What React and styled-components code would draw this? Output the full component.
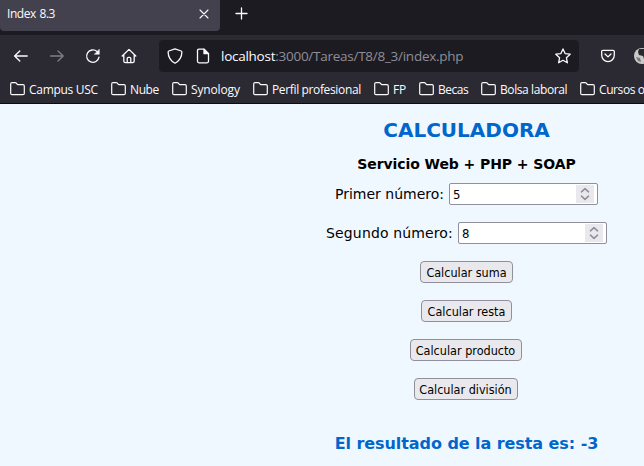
import React from 'react';
import styled, { createGlobalStyle } from 'styled-components';

const GlobalStyle = createGlobalStyle`
  * { box-sizing: border-box; }
  html, body { margin: 0; overflow: hidden; background: #f0f8ff; }
`;

const Window = styled.div`
  width: 644px;
  height: 466px;
  overflow: hidden;
  display: flex;
  flex-direction: column;
  font-family: "Open Sans", "Noto Sans", sans-serif;
  color: #fbfbfe;
`;

const TabStrip = styled.div`
  flex: none;
  height: 35px;
  display: flex;
  background: #1c1b22;
`;

const Tab = styled.div`
  width: 220px;
  height: 31px;
  padding: 0 10px 4px 7px;
  display: flex;
  align-items: center;
  justify-content: space-between;
  background: #42414d;
  border-radius: 0 0 4px 4px;
  font-size: 12px;
  letter-spacing: -0.45px;
  word-spacing: 1px;
`;

const NewTab = styled.div`
  padding: 7px 0 0 15px;
`;

const Icon = styled.svg`
  display: block;
  flex: none;
  fill: none;
  stroke: currentColor;
  stroke-width: ${(p) => p.$weight || 1.3};
  stroke-linecap: round;
  stroke-linejoin: round;
`;

const NavBar = styled.div`
  flex: none;
  height: 41px;
  display: flex;
  align-items: center;
  padding-left: 13px;
  background: #2b2a33;
`;

const NavIcon = styled.span`
  width: 16px;
  margin-right: 20px;
  opacity: ${(p) => (p.$dim ? 0.4 : 1)};
`;

const UrlBar = styled.div`
  width: 420px;
  height: 32px;
  margin: 0 22px 0 2px;
  padding: 0 8px;
  display: flex;
  align-items: center;
  gap: 12px;
  flex: none;
  background: #1c1b22;
  border-radius: 4px;
`;

const Url = styled.div`
  flex: 1;
  margin-left: -2px;
  white-space: nowrap;
  font-size: 13.5px;
  letter-spacing: -0.26px;
  color: #8f8e96;
`;

const Host = styled.span`
  color: #fbfbfe;
`;

const Avatar = styled.svg`
  flex: none;
  display: block;
  margin-left: 19px;
`;

const BookmarkBar = styled.div`
  flex: none;
  height: 28px;
  display: flex;
  padding: 0 0 2px 10px;
  background: #2b2a33;
  border-bottom: 1px solid #0c0c0d;
`;

const Bookmark = styled.div`
  flex: none;
  width: ${(p) => p.$width}px;
  display: flex;
  align-items: center;
  gap: 4px;
  white-space: nowrap;
  font-size: 12px;
  letter-spacing: ${(p) => p.$tracking}px;
`;

const BookmarkName = styled.span`
  padding-top: 2px;
`;

const Page = styled.main`
  flex: none;
  width: 933px;
  height: 362px;
  padding-top: 14px;
  display: flex;
  flex-direction: column;
  align-items: center;
  background: #f0f8ff;
  color: #000;
  font-family: "DejaVu Sans", Verdana, sans-serif;
`;

const Title = styled.h1`
  margin: 0;
  font-size: 20px;
  line-height: 24px;
  letter-spacing: 0;
  color: #0066cc;
`;

const Subtitle = styled.h2`
  margin: 12px 0 9px;
  font-size: 14px;
  line-height: 20px;
  letter-spacing: -0.08px;
`;

const Field = styled.label`
  height: 22px;
  margin-bottom: 17px;
  display: flex;
  align-items: center;
  gap: 5px;
  font-size: 14px;
  letter-spacing: ${(p) => p.$tracking}px;
`;

const NumberBox = styled.span`
  width: 149px;
  height: 22px;
  padding: 0 3px;
  display: flex;
  align-items: center;
  justify-content: space-between;
  background: #fff;
  border: 1px solid #8f8f9d;
  border-radius: 2px;
  font-family: "DejaVu Sans Condensed", "DejaVu Sans", sans-serif;
  font-size: 13px;
`;

const Spinner = styled.span`
  width: 18px;
  height: 18px;
  display: grid;
  place-items: center;
  background: #e9e9ed;
  color: #8f8f9d;
`;

const Button = styled.button`
  width: ${(p) => p.$width}px;
  height: 22px;
  margin: 0 ${(p) => p.$nudge || 0}px 17px 0;
  padding: 0;
  border: 1px solid #8f8f9d;
  border-radius: 4px;
  background: #e9e9ed;
  color: #000;
  white-space: nowrap;
  font: 12.5px "DejaVu Sans Condensed", "DejaVu Sans", sans-serif;
  letter-spacing: 0;
`;

const Result = styled.p`
  margin: 17px 0 0;
  font-size: 16px;
  line-height: 20px;
  font-weight: bold;
  letter-spacing: -0.07px;
  color: #0066cc;
`;

const bookmarks = [
  ['Campus USC', 101, -0.3],
  ['Nube', 61, -0.4],
  ['Synology', 81, -0.15],
  ['Perfil profesional', 121, -0.36],
  ['FP', 45, -0.2],
  ['Becas', 62, -0.5],
  ['Bolsa laboral', 99, -0.4],
  ['Cursos o', 66, -0.4],
];

const fields = [['Primer número:', 5, 0], ['Segundo número:', 8, 0.14]];

const actions = [
  ['Calcular suma', 93, 0],
  ['Calcular resta', 91, 0],
  ['Calcular producto', 112, 2],
  ['Calcular división', 104, 2],
];

const Folder = () => (
  <Icon width="15" height="14" viewBox="0 0 15 14" $weight={1.2}>
    <path d="M.7 11.5V2Q.7.7 2 .7h3.2q.7 0 1.1.5l.8 1q.3.4.8.4H13q1.3 0 1.3 1.3v7.6q0 1.200-1.3 1.200H2Q.7 12.700.7 11.500Z" />
  </Icon>
);

export default function App() {
  return (
    <>
      <GlobalStyle />
      <Window>
        <TabStrip>
          <Tab>
            <span>Index 8.3</span>
            <Icon width="12" height="12" viewBox="0 0 12 12" $weight={1.1}>
              <path d="m2 2 8 8m0-8-8 8" />
            </Icon>
          </Tab>
          <NewTab>
            <Icon width="13" height="13" viewBox="0 0 13 13" $weight={1.3}>
              <path d="M6.5 1v11M1 6.5h11" />
            </Icon>
          </NewTab>
        </TabStrip>
        <NavBar>
          <NavIcon>
            <Icon width="16" height="16" viewBox="0 0 16 16">
              <path d="M14.2 8H1.6m5.2-5L1.6 8l5.2 5" />
            </Icon>
          </NavIcon>
          <NavIcon $dim>
            <Icon width="16" height="16" viewBox="0 0 16 16">
              <path d="M1.6 8h12.6M9 3l5.2 5L9 13" />
            </Icon>
          </NavIcon>
          <NavIcon>
            <Icon width="16" height="16" viewBox="0 0 16 16">
              <path d="M14 9.2A6.2 6.2 0 1 1 12 3.5l1 .9" />
              <path d="M14.3 1.5v4.800H9.600Z" fill="currentColor" strokeWidth=".5" />
            </Icon>
          </NavIcon>
          <NavIcon>
            <Icon width="16" height="16" viewBox="0 0 16 16">
              <path d="M1.2 8 8 1.4 14.8 8M2.8 6.8v6.3q0 1.6 1.6 1.6h7.2q1.6 0 1.6-1.6V6.8M6.2 14.5v-4q0-1.2 1.2-1.2h1.2q1.2 0 1.2 1.2v4" />
            </Icon>
          </NavIcon>
          <UrlBar>
            <Icon width="16" height="16" viewBox="0 0 16 16">
              <path d="M8 .8 14.200 3q.7.3.7 1-.1 7.600-6.900 11.200Q1.200 11.600 1.100 4q0-.7.7-1Z" />
            </Icon>
            <Icon width="16" height="16" viewBox="0 0 16 16">
              <path d="M9 1.200H4q-1.500 0-1.500 1.500v10.600q0 1.500 1.500 1.500h8q1.500 0 1.500-1.500V5.700Z" />
              <path d="M9 1.200v4.500h4.500Z" fill="currentColor" />
            </Icon>
            <Url><Host>localhost</Host>:3000/Tareas/T8/8_3/index.php</Url>
            <Icon width="16" height="16" viewBox="0 0 16 16">
              <path d="m8 .9 2.100 4.700 5.100.6-3.800 3.500 1 5.100L8 12.300l-4.400 2.500 1-5.100L.8 6.200l5.100-.6Z" />
            </Icon>
          </UrlBar>
          <Icon width="14" height="14" viewBox="0 0 14 14">
            <path d="M1.900 1.300h10.200q1.200 0 1.200 1.200v3.800a6.300 6.300 0 0 1-12.600 0V2.500q0-1.200 1.200-1.200ZM4 5l3 2.900L10 5" />
          </Icon>
          <Avatar width="16" height="16" viewBox="0 0 16 16">
            <circle cx="8" cy="8" r="8" fill="#c9c9c9" />
            <path d="M5 1h9v12l-4-2-1-3-4-1-1-3Z" fill="#28272a" />
            <path d="M2 9l4 1 1 4-3-1Z" fill="#77777a" />
          </Avatar>
        </NavBar>
        <BookmarkBar>
          {bookmarks.map(([name, width, tracking]) => (
            <Bookmark key={name} $width={width} $tracking={tracking}>
              <Folder />
              <BookmarkName>{name}</BookmarkName>
            </Bookmark>
          ))}
        </BookmarkBar>
        <Page>
          <Title>CALCULADORA</Title>
          <Subtitle>Servicio Web + PHP + SOAP</Subtitle>
          {fields.map(([label, value, tracking]) => (
            <Field key={label} $tracking={tracking}>
              {label}
              <NumberBox>
                {value}
                <Spinner>
                  <Icon width="10" height="14" viewBox="0 0 10 14" $weight={1.6}>
                    <path d="M1.500 4.800 5 1.700l3.500 3.100M1.500 9.200 5 12.300l3.500-3.100" />
                  </Icon>
                </Spinner>
              </NumberBox>
            </Field>
          ))}
          {actions.map(([label, width, nudge]) => (
            <Button key={label} $width={width} $nudge={nudge}>{label}</Button>
          ))}
          <Result>El resultado de la resta es: -3</Result>
        </Page>
      </Window>
    </>
  );
}
